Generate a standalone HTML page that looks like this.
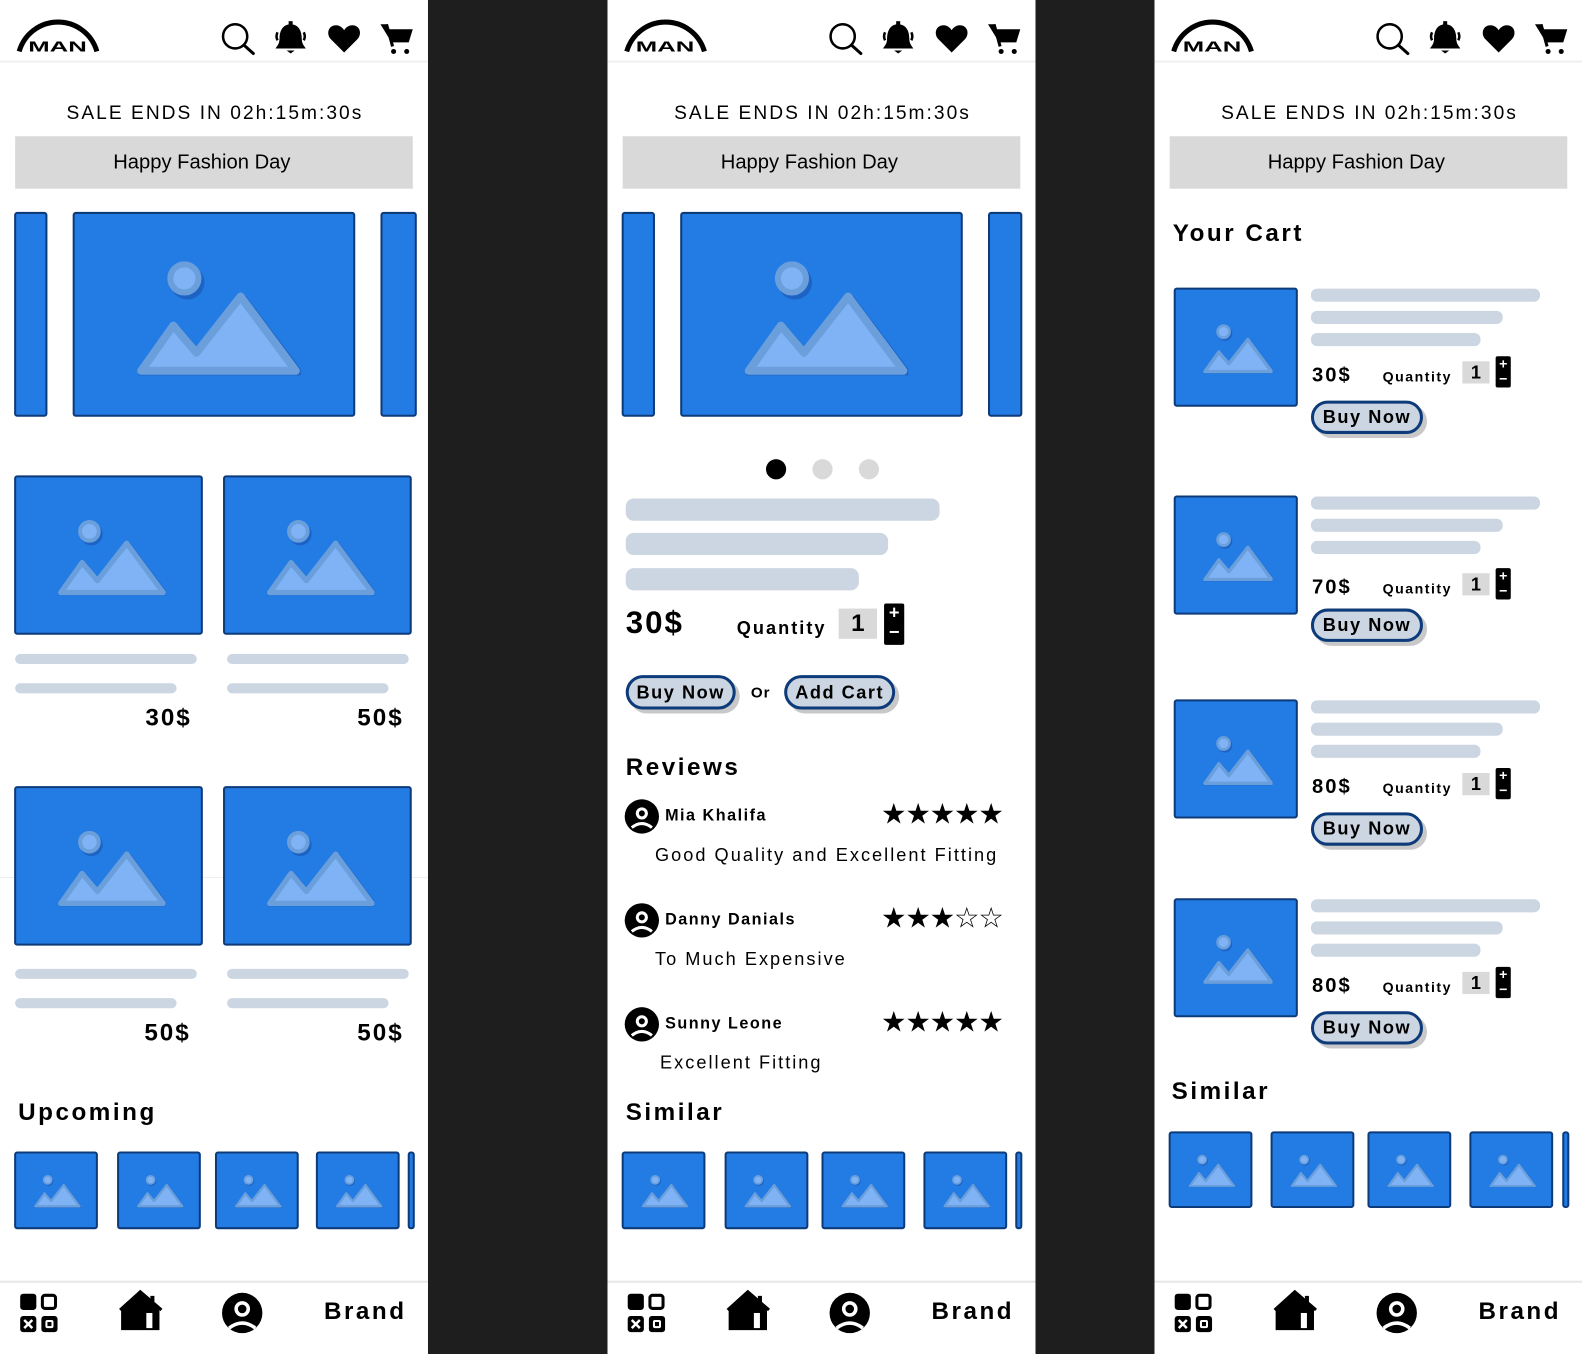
<!DOCTYPE html>
<html><head><meta charset="utf-8"><style>
*{margin:0;padding:0;box-sizing:border-box}
body{width:1582px;height:1342px;background:#fff;position:relative;overflow:hidden;font-family:"Liberation Sans",sans-serif;color:#000}
#w{position:absolute;left:0;top:0;width:1568px;height:1330px;transform:scale(1.0092);transform-origin:0 0}
.dk{position:absolute;top:0;height:1342px;background:#1e1e1e}
.p{position:absolute;top:0;width:424px;height:1342px;background:#fff}
.a{position:absolute}
.hl{position:absolute;left:0;width:424px;top:60px;height:2px;background:#f0f0f0}
.sale{position:absolute;left:0;width:424px;top:102px;text-align:center;font-size:19px;letter-spacing:2px;padding-left:2px}
.bar{position:absolute;left:15px;width:394px;top:135px;height:52px;background:#d9d9d9;text-align:center;line-height:52px;font-size:20px;padding-right:24px}
.bx{position:absolute;background:#237be4;border:2px solid #0d3b7a;border-radius:3px;display:flex;align-items:center;justify-content:center;overflow:hidden}
.bx svg{width:62%;height:auto}
.ln{position:absolute;background:#cbd6e2;border-radius:6px}
.pr{position:absolute;font-weight:bold;letter-spacing:2px}
.h2{position:absolute;font-weight:bold;font-size:24px;letter-spacing:2.5px}
.nl{position:absolute;left:0;width:424px;top:1269px;height:2px;background:#e6e6e6}
.brand{position:absolute;left:321px;top:1286px;font-weight:bold;font-size:24px;letter-spacing:2.5px}
.btn{position:absolute;border:3px solid #0d3b7a;border-radius:18px;background:#cbd6e2;font-weight:bold;text-align:center;letter-spacing:1.5px;box-shadow:4px 4px 0 #c8c8c8}
.qb{position:absolute;background:#d9d9d9;text-align:center;font-weight:bold}
.pm{position:absolute;background:#000;border-radius:2px;color:#fff;text-align:center;font-weight:bold}
.st{position:absolute;font-size:28px;letter-spacing:-1px;line-height:28px}
.nm{position:absolute;font-weight:bold;font-size:16px;letter-spacing:1.5px}
.cm{position:absolute;font-size:18px;letter-spacing:2px}
.dot{position:absolute;width:20px;height:20px;border-radius:50%}
</style></head><body>
<svg width="0" height="0" style="position:absolute">
<defs>
<symbol id="im" viewBox="-6 -4 172 122">
<g transform="translate(3,4)" fill="#1d63c4"><circle cx="45" cy="17" r="17"/><path d="M0 110 L34 63 L57 90 L101 34 L158 110Z" stroke="#1d63c4" stroke-width="8" stroke-linejoin="round"/></g>
<circle cx="45" cy="17" r="14" fill="#7fb3f5" stroke="#6a9fdc" stroke-width="6"/>
<path d="M2 109 L34 64 L57 91 L101 35 L156 109Z" fill="#7fb3f5" stroke="#6a9fdc" stroke-width="8" stroke-linejoin="round"/>
</symbol>
<symbol id="hdr" viewBox="0 0 424 62">
<path d="M19 51 A40 40 0 0 1 96 51" fill="none" stroke="#000" stroke-width="5"/>
<text x="28" y="51" font-family="Liberation Sans" font-weight="bold" font-size="15" textLength="58" lengthAdjust="spacingAndGlyphs">MAN</text>
<circle cx="233" cy="36" r="12" fill="none" stroke="#000" stroke-width="2.5"/><path d="M242 45 L251 53" stroke="#000" stroke-width="3" stroke-linecap="round"/>
<path d="M288 24 c-8 0 -11 7 -11 14 c0 6 -3 8 -4 10 h30 c-1 -2 -4 -4 -4 -10 c0 -7 -3 -14 -11 -14z" fill="#000"/><rect x="286" y="21" width="4" height="4" fill="#000"/><path d="M284 50 h8 l-4 3z" fill="#000"/>
<path d="M275 32 q-2 4 0 8 M301 32 q2 4 0 8" stroke="#000" stroke-width="2.5" fill="none"/>
<path d="M341 52 L328 39 C323 34 325 25 333 25 C337 25 340 28 341 30 C342 28 345 25 349 25 C357 25 359 34 354 39 Z" fill="#000"/>
<path d="M377 24 h6 l3 5 h23 l-4 13 h-17 z" fill="#000"/><path d="M383 24 l6 22" stroke="#000" stroke-width="3"/><circle cx="390" cy="51" r="2.5"/><circle cx="403" cy="51" r="2.5"/>
</symbol>
<symbol id="nav" viewBox="0 0 424 72">
<rect x="20" y="12" width="16" height="16" rx="3" fill="#000"/><rect x="42" y="13.5" width="13" height="13" rx="2.5" fill="none" stroke="#000" stroke-width="3"/>
<rect x="20" y="34" width="16" height="16" rx="3" fill="#000"/><path d="M24 38 l8 8 M32 38 l-8 8" stroke="#fff" stroke-width="2.5"/>
<rect x="41" y="34" width="16" height="16" rx="3" fill="#000"/><rect x="46" y="39" width="6" height="6" rx="1" fill="none" stroke="#fff" stroke-width="2"/>
<path d="M139 10 L120 27 V48 H158 V27 L153 22 V14 H149 V18 Z" fill="#000"/><path d="M119 28 L139 10 L160 28" stroke="#000" stroke-width="3" fill="none"/><rect x="145" y="31" width="6" height="15" fill="#fff"/>
<circle cx="240" cy="31" r="20" fill="#000"/><circle cx="240" cy="27" r="6" fill="none" stroke="#fff" stroke-width="3.5"/><path d="M227 46 q13 -10 26 0" stroke="#fff" stroke-width="3.5" fill="none"/>
</symbol>
<symbol id="av" viewBox="0 0 36 36"><circle cx="18" cy="18" r="17" fill="#000"/><circle cx="18" cy="15" r="4.5" fill="none" stroke="#fff" stroke-width="3"/><path d="M8 29 q10 -8 20 0" stroke="#fff" stroke-width="3" fill="none"/></symbol>
</defs></svg>
<div id="w">
<div class="dk" style="left:424px;width:178px"></div>
<div class="dk" style="left:1026px;width:118px"></div>

<!-- PANEL 1 -->
<div class="p" style="left:0">
<svg class="a" style="left:0;top:0" width="424" height="62"><use href="#hdr"/></svg>
<div class="hl"></div>
<div class="sale">SALE ENDS IN 02h:15m:30s</div>
<div class="bar">Happy Fashion Day</div>
<div class="bx" style="left:14px;top:210px;width:33px;height:203px"></div>
<div class="bx" style="left:72px;top:210px;width:280px;height:203px"><svg viewBox="-6 -4 172 122"><use href="#im"/></svg></div>
<div class="bx" style="left:377px;top:210px;width:36px;height:203px"></div>
<div class="bx" style="left:14px;top:471px;width:187px;height:158px"><svg viewBox="-6 -4 172 122"><use href="#im"/></svg></div>
<div class="bx" style="left:221px;top:471px;width:187px;height:158px"><svg viewBox="-6 -4 172 122"><use href="#im"/></svg></div>
<div class="ln" style="left:15px;top:648px;width:180px;height:10px"></div>
<div class="ln" style="left:15px;top:677px;width:160px;height:10px"></div>
<div class="ln" style="left:225px;top:648px;width:180px;height:10px"></div>
<div class="ln" style="left:225px;top:677px;width:160px;height:10px"></div>
<div class="pr" style="left:144px;top:698px;font-size:24px">30$</div>
<div class="pr" style="left:354px;top:698px;font-size:24px">50$</div>
<div class="a" style="left:0;top:869px;width:424px;height:1px;background:#eee"></div>
<div class="bx" style="left:14px;top:779px;width:187px;height:158px"><svg viewBox="-6 -4 172 122"><use href="#im"/></svg></div>
<div class="bx" style="left:221px;top:779px;width:187px;height:158px"><svg viewBox="-6 -4 172 122"><use href="#im"/></svg></div>
<div class="ln" style="left:15px;top:960px;width:180px;height:10px"></div>
<div class="ln" style="left:15px;top:989px;width:160px;height:10px"></div>
<div class="ln" style="left:225px;top:960px;width:180px;height:10px"></div>
<div class="ln" style="left:225px;top:989px;width:160px;height:10px"></div>
<div class="pr" style="left:143px;top:1010px;font-size:24px">50$</div>
<div class="pr" style="left:354px;top:1010px;font-size:24px">50$</div>
<div class="h2" style="left:18px;top:1089px">Upcoming</div>
<div class="bx" style="left:14px;top:1141px;width:83px;height:77px"><svg viewBox="-6 -4 172 122"><use href="#im"/></svg></div>
<div class="bx" style="left:116px;top:1141px;width:83px;height:77px"><svg viewBox="-6 -4 172 122"><use href="#im"/></svg></div>
<div class="bx" style="left:213px;top:1141px;width:83px;height:77px"><svg viewBox="-6 -4 172 122"><use href="#im"/></svg></div>
<div class="bx" style="left:313px;top:1141px;width:83px;height:77px"><svg viewBox="-6 -4 172 122"><use href="#im"/></svg></div>
<div class="bx" style="left:404px;top:1141px;width:7px;height:77px"></div>
<div class="nl"></div>
<svg class="a" style="left:0;top:1270px" width="424" height="72"><use href="#nav"/></svg>
<div class="brand">Brand</div>
</div>

<!-- PANEL 2 -->
<div class="p" style="left:602px">
<svg class="a" style="left:0;top:0" width="424" height="62"><use href="#hdr"/></svg>
<div class="hl"></div>
<div class="sale">SALE ENDS IN 02h:15m:30s</div>
<div class="bar">Happy Fashion Day</div>
<div class="bx" style="left:14px;top:210px;width:33px;height:203px"></div>
<div class="bx" style="left:72px;top:210px;width:280px;height:203px"><svg viewBox="-6 -4 172 122"><use href="#im"/></svg></div>
<div class="bx" style="left:377px;top:210px;width:34px;height:203px"></div>
<div class="dot" style="left:157px;top:455px;background:#000"></div>
<div class="dot" style="left:203px;top:455px;background:#d9d9d9"></div>
<div class="dot" style="left:249px;top:455px;background:#d9d9d9"></div>
<div class="ln" style="left:18px;top:494px;width:311px;height:22px;border-radius:8px"></div>
<div class="ln" style="left:18px;top:528px;width:260px;height:22px;border-radius:8px"></div>
<div class="ln" style="left:18px;top:563px;width:231px;height:22px;border-radius:8px"></div>
<div class="pr" style="left:18px;top:599px;font-size:31px">30$</div>
<div class="a" style="left:128px;top:612px;font-size:18px;font-weight:bold;letter-spacing:2px">Quantity</div>
<div class="qb" style="left:229px;top:603px;width:38px;height:30px;font-size:24px;line-height:30px">1</div>
<div class="pm" style="left:274px;top:598px;width:20px;height:41px;font-size:18px;line-height:19px">+<br>−</div>
<div class="btn" style="left:18px;top:669px;width:109px;height:34px;font-size:18px;line-height:28px">Buy Now</div>
<div class="a" style="left:142px;top:678px;font-size:15px;font-weight:bold;letter-spacing:1px">Or</div>
<div class="btn" style="left:175px;top:669px;width:110px;height:34px;font-size:18px;line-height:28px">Add Cart</div>
<div class="h2" style="left:18px;top:747px">Reviews</div>
<svg class="a" style="left:16px;top:791px" width="36" height="36"><use href="#av"/></svg>
<div class="nm" style="left:57px;top:800px">Mia Khalifa</div>
<div class="st" style="left:271px;top:793px">★★★★★</div>
<div class="cm" style="left:47px;top:837px">Good Quality and Excellent Fitting</div>
<svg class="a" style="left:16px;top:894px" width="36" height="36"><use href="#av"/></svg>
<div class="nm" style="left:57px;top:903px">Danny Danials</div>
<div class="st" style="left:271px;top:896px">★★★☆☆</div>
<div class="cm" style="left:47px;top:940px">To Much Expensive</div>
<svg class="a" style="left:16px;top:997px" width="36" height="36"><use href="#av"/></svg>
<div class="nm" style="left:57px;top:1006px">Sunny Leone</div>
<div class="st" style="left:271px;top:999px">★★★★★</div>
<div class="cm" style="left:52px;top:1043px">Excellent Fitting</div>
<div class="h2" style="left:18px;top:1089px">Similar</div>
<div class="bx" style="left:14px;top:1141px;width:83px;height:77px"><svg viewBox="-6 -4 172 122"><use href="#im"/></svg></div>
<div class="bx" style="left:116px;top:1141px;width:83px;height:77px"><svg viewBox="-6 -4 172 122"><use href="#im"/></svg></div>
<div class="bx" style="left:212px;top:1141px;width:83px;height:77px"><svg viewBox="-6 -4 172 122"><use href="#im"/></svg></div>
<div class="bx" style="left:313px;top:1141px;width:83px;height:77px"><svg viewBox="-6 -4 172 122"><use href="#im"/></svg></div>
<div class="bx" style="left:404px;top:1141px;width:7px;height:77px"></div>
<div class="nl"></div>
<svg class="a" style="left:0;top:1270px" width="424" height="72"><use href="#nav"/></svg>
<div class="brand">Brand</div>
</div>

<!-- PANEL 3 -->
<div class="p" style="left:1144px;width:438px">
<svg class="a" style="left:0;top:0" width="424" height="62"><use href="#hdr"/></svg>
<div class="hl"></div>
<div class="sale">SALE ENDS IN 02h:15m:30s</div>
<div class="bar">Happy Fashion Day</div>
<div class="h2" style="left:18px;top:218px">Your Cart</div>

<div class="a" style="left:0;top:285px;width:424px;height:150px">
<div class="bx" style="left:19px;top:0;width:123px;height:118px"><svg viewBox="-6 -4 172 122"><use href="#im"/></svg></div>
<div class="ln" style="left:155px;top:1px;width:227px;height:13px"></div>
<div class="ln" style="left:155px;top:23px;width:190px;height:13px"></div>
<div class="ln" style="left:155px;top:45px;width:168px;height:13px"></div>
<div class="pr" style="left:156px;top:76px;font-size:20px">30$</div>
<div class="a" style="left:226px;top:80px;font-size:14px;font-weight:bold;letter-spacing:1.5px">Quantity</div>
<div class="qb" style="left:305px;top:73px;width:27px;height:22px;font-size:18px;line-height:22px">1</div>
<div class="pm" style="left:338px;top:68px;width:15px;height:31px;font-size:14px;line-height:15px">+<br>−</div>
<div class="btn" style="left:155px;top:112px;width:111px;height:33px;font-size:18px;line-height:27px">Buy Now</div>
</div>

<div class="a" style="left:0;top:491px;width:424px;height:150px">
<div class="bx" style="left:19px;top:0;width:123px;height:118px"><svg viewBox="-6 -4 172 122"><use href="#im"/></svg></div>
<div class="ln" style="left:155px;top:1px;width:227px;height:13px"></div>
<div class="ln" style="left:155px;top:23px;width:190px;height:13px"></div>
<div class="ln" style="left:155px;top:45px;width:168px;height:13px"></div>
<div class="pr" style="left:156px;top:80px;font-size:20px">70$</div>
<div class="a" style="left:226px;top:84px;font-size:14px;font-weight:bold;letter-spacing:1.5px">Quantity</div>
<div class="qb" style="left:305px;top:77px;width:27px;height:22px;font-size:18px;line-height:22px">1</div>
<div class="pm" style="left:338px;top:72px;width:15px;height:31px;font-size:14px;line-height:15px">+<br>−</div>
<div class="btn" style="left:155px;top:112px;width:111px;height:33px;font-size:18px;line-height:27px">Buy Now</div>
</div>

<div class="a" style="left:0;top:693px;width:424px;height:150px">
<div class="bx" style="left:19px;top:0;width:123px;height:118px"><svg viewBox="-6 -4 172 122"><use href="#im"/></svg></div>
<div class="ln" style="left:155px;top:1px;width:227px;height:13px"></div>
<div class="ln" style="left:155px;top:23px;width:190px;height:13px"></div>
<div class="ln" style="left:155px;top:45px;width:168px;height:13px"></div>
<div class="pr" style="left:156px;top:76px;font-size:20px">80$</div>
<div class="a" style="left:226px;top:80px;font-size:14px;font-weight:bold;letter-spacing:1.5px">Quantity</div>
<div class="qb" style="left:305px;top:73px;width:27px;height:22px;font-size:18px;line-height:22px">1</div>
<div class="pm" style="left:338px;top:68px;width:15px;height:31px;font-size:14px;line-height:15px">+<br>−</div>
<div class="btn" style="left:155px;top:112px;width:111px;height:33px;font-size:18px;line-height:27px">Buy Now</div>
</div>

<div class="a" style="left:0;top:890px;width:424px;height:150px">
<div class="bx" style="left:19px;top:0;width:123px;height:118px"><svg viewBox="-6 -4 172 122"><use href="#im"/></svg></div>
<div class="ln" style="left:155px;top:1px;width:227px;height:13px"></div>
<div class="ln" style="left:155px;top:23px;width:190px;height:13px"></div>
<div class="ln" style="left:155px;top:45px;width:168px;height:13px"></div>
<div class="pr" style="left:156px;top:76px;font-size:20px">80$</div>
<div class="a" style="left:226px;top:80px;font-size:14px;font-weight:bold;letter-spacing:1.5px">Quantity</div>
<div class="qb" style="left:305px;top:73px;width:27px;height:22px;font-size:18px;line-height:22px">1</div>
<div class="pm" style="left:338px;top:68px;width:15px;height:31px;font-size:14px;line-height:15px">+<br>−</div>
<div class="btn" style="left:155px;top:112px;width:111px;height:33px;font-size:18px;line-height:27px">Buy Now</div>
</div>

<div class="h2" style="left:17px;top:1068px">Similar</div>
<div class="bx" style="left:14px;top:1121px;width:83px;height:76px"><svg viewBox="-6 -4 172 122"><use href="#im"/></svg></div>
<div class="bx" style="left:115px;top:1121px;width:83px;height:76px"><svg viewBox="-6 -4 172 122"><use href="#im"/></svg></div>
<div class="bx" style="left:211px;top:1121px;width:83px;height:76px"><svg viewBox="-6 -4 172 122"><use href="#im"/></svg></div>
<div class="bx" style="left:312px;top:1121px;width:83px;height:76px"><svg viewBox="-6 -4 172 122"><use href="#im"/></svg></div>
<div class="bx" style="left:404px;top:1121px;width:7px;height:76px"></div>
<div class="nl" style="width:438px"></div>
<svg class="a" style="left:0;top:1270px" width="424" height="72"><use href="#nav"/></svg>
<div class="brand">Brand</div>
</div>
</div>
</body></html>
